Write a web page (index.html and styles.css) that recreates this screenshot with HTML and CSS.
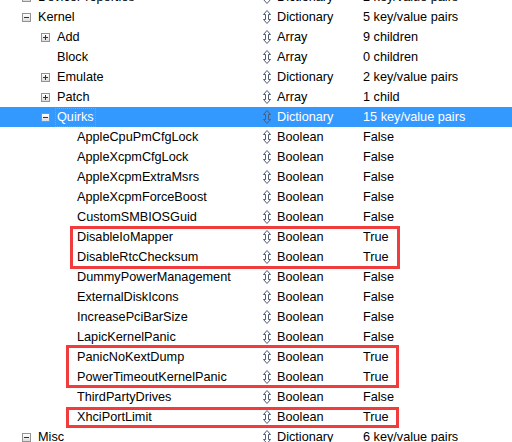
FILE: index.html
```html
<!DOCTYPE html>
<html lang="en">
<head>
  <meta charset="UTF-8" />
  <title>config.plist</title>
  <link rel="stylesheet" href="styles.css">
</head>
<body>
  <svg width="0" height="0" class="defs">
    <symbol id="updown" viewBox="0 0 8 14">
      <polygon points="4,0.5 7.5,4.5 5.5,4.5 5.5,9.5 7.5,9.5 4,13.5 0.5,9.5 2.5,9.5 2.5,4.5 0.5,4.5" fill="none" stroke="#4f5c78" stroke-width="1" />
    </symbol>
  </svg>

  <div class="tree">
    <div class="row"><div class="key d0"><span class="box minus"></span><span class="name">DeviceProperties</span></div><div class="type"><svg class="ud"><use href="#updown"/></svg>Dictionary</div><div class="value">2 key/value pairs</div></div>
    <div class="row"><div class="key d0"><span class="box minus"></span><span class="name">Kernel</span></div><div class="type"><svg class="ud"><use href="#updown"/></svg>Dictionary</div><div class="value">5 key/value pairs</div></div>
    <div class="row"><div class="key d1"><span class="box plus"></span><span class="name">Add</span></div><div class="type"><svg class="ud"><use href="#updown"/></svg>Array</div><div class="value">9 children</div></div>
    <div class="row"><div class="key d1"><span class="box none"></span><span class="name">Block</span></div><div class="type"><svg class="ud"><use href="#updown"/></svg>Array</div><div class="value">0 children</div></div>
    <div class="row"><div class="key d1"><span class="box plus"></span><span class="name">Emulate</span></div><div class="type"><svg class="ud"><use href="#updown"/></svg>Dictionary</div><div class="value">2 key/value pairs</div></div>
    <div class="row"><div class="key d1"><span class="box plus"></span><span class="name">Patch</span></div><div class="type"><svg class="ud"><use href="#updown"/></svg>Array</div><div class="value">1 child</div></div>
    <div class="row selected"><div class="key d1"><span class="box minus"></span><span class="name focus">Quirks</span></div><div class="type"><svg class="ud"><use href="#updown"/></svg>Dictionary</div><div class="value">15 key/value pairs</div></div>
    <div class="row"><div class="key d2"><span class="name">AppleCpuPmCfgLock</span></div><div class="type"><svg class="ud"><use href="#updown"/></svg>Boolean</div><div class="value">False</div></div>
    <div class="row"><div class="key d2"><span class="name">AppleXcpmCfgLock</span></div><div class="type"><svg class="ud"><use href="#updown"/></svg>Boolean</div><div class="value">False</div></div>
    <div class="row"><div class="key d2"><span class="name">AppleXcpmExtraMsrs</span></div><div class="type"><svg class="ud"><use href="#updown"/></svg>Boolean</div><div class="value">False</div></div>
    <div class="row"><div class="key d2"><span class="name">AppleXcpmForceBoost</span></div><div class="type"><svg class="ud"><use href="#updown"/></svg>Boolean</div><div class="value">False</div></div>
    <div class="row"><div class="key d2"><span class="name">CustomSMBIOSGuid</span></div><div class="type"><svg class="ud"><use href="#updown"/></svg>Boolean</div><div class="value">False</div></div>
    <div class="mark mark-a">
      <div class="row"><div class="key d2"><span class="name">DisableIoMapper</span></div><div class="type"><svg class="ud"><use href="#updown"/></svg>Boolean</div><div class="value">True</div></div>
      <div class="row"><div class="key d2"><span class="name">DisableRtcChecksum</span></div><div class="type"><svg class="ud"><use href="#updown"/></svg>Boolean</div><div class="value">True</div></div>
      <span class="mark-box"></span>
    </div>
    <div class="row"><div class="key d2"><span class="name">DummyPowerManagement</span></div><div class="type"><svg class="ud"><use href="#updown"/></svg>Boolean</div><div class="value">False</div></div>
    <div class="row"><div class="key d2"><span class="name">ExternalDiskIcons</span></div><div class="type"><svg class="ud"><use href="#updown"/></svg>Boolean</div><div class="value">False</div></div>
    <div class="row"><div class="key d2"><span class="name">IncreasePciBarSize</span></div><div class="type"><svg class="ud"><use href="#updown"/></svg>Boolean</div><div class="value">False</div></div>
    <div class="row"><div class="key d2"><span class="name">LapicKernelPanic</span></div><div class="type"><svg class="ud"><use href="#updown"/></svg>Boolean</div><div class="value">False</div></div>
    <div class="mark mark-b">
      <div class="row"><div class="key d2"><span class="name">PanicNoKextDump</span></div><div class="type"><svg class="ud"><use href="#updown"/></svg>Boolean</div><div class="value">True</div></div>
      <div class="row"><div class="key d2"><span class="name">PowerTimeoutKernelPanic</span></div><div class="type"><svg class="ud"><use href="#updown"/></svg>Boolean</div><div class="value">True</div></div>
      <span class="mark-box"></span>
    </div>
    <div class="row"><div class="key d2"><span class="name">ThirdPartyDrives</span></div><div class="type"><svg class="ud"><use href="#updown"/></svg>Boolean</div><div class="value">False</div></div>
    <div class="mark mark-c">
      <div class="row"><div class="key d2"><span class="name">XhciPortLimit</span></div><div class="type"><svg class="ud"><use href="#updown"/></svg>Boolean</div><div class="value">True</div></div>
      <span class="mark-box"></span>
    </div>
    <div class="row"><div class="key d0"><span class="box minus"></span><span class="name">Misc</span></div><div class="type"><svg class="ud"><use href="#updown"/></svg>Dictionary</div><div class="value">6 key/value pairs</div></div>
  </div>
</body>
</html>
```

FILE: styles.css
```css
html, body {
  margin: 0;
  background: #fff;
  overflow: hidden;
}

body {
  width: 512px;
  height: 442px;
  font-family: "Liberation Sans", Arial, sans-serif;
  font-size: 12.7px;
  color: #000;
}

.defs {
  position: absolute;
}

.tree {
  margin-top: -13px;
}

.row {
  display: flex;
  height: 20px;
  line-height: 20px;
  white-space: nowrap;
}

.row.selected {
  background: #3399ff;
  color: #fff;
}

.key {
  box-sizing: border-box;
  width: 263px;
  flex: none;
  display: flex;
  align-items: center;
}

.key.d0 { padding-left: 22px; }
.key.d1 { padding-left: 41px; }
.key.d2 { padding-left: 77px; }

.box {
  box-sizing: border-box;
  width: 9px;
  height: 9px;
  margin-right: 7px;
  border: 1px solid #929292;
  background: linear-gradient(#ffffff, #dcdcdc);
  position: relative;
  flex: none;
}

.box.none {
  border: none;
  background: none;
}

.box.minus::before,
.box.plus::before,
.box.plus::after {
  content: "";
  position: absolute;
  background: #333;
}

.box.minus::before,
.box.plus::before {
  left: 1px;
  top: 3px;
  width: 5px;
  height: 1px;
}

.box.plus::after {
  left: 3px;
  top: 1px;
  width: 1px;
  height: 5px;
}

.name.focus {
  border: 1px dotted #f08a30;
  line-height: 17px;
  padding: 0 1px;
  margin-left: -2px;
}

.type {
  box-sizing: border-box;
  width: 100px;
  flex: none;
  display: flex;
  align-items: center;
}

.ud {
  width: 8px;
  height: 14px;
  margin-right: 6px;
  flex: none;
}

.value {
  flex: 1;
}

.mark {
  position: relative;
}

.mark-box {
  position: absolute;
  box-sizing: border-box;
  border: 3px solid #f03c3c;
}

.mark-a .mark-box {
  left: 70px;
  width: 330px;
  top: -1px;
  bottom: -2px;
}

.mark-b .mark-box {
  left: 66px;
  width: 333px;
  top: -2px;
  bottom: -1px;
}

.mark-c .mark-box {
  left: 66px;
  width: 333px;
  top: 0;
  bottom: -1px;
}
```
